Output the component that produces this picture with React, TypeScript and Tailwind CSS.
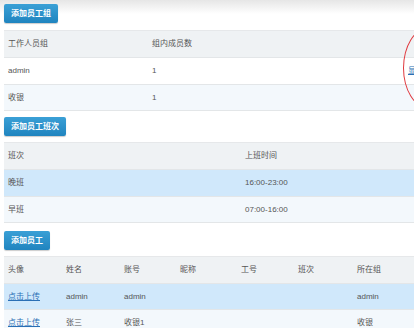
import * as React from "react";

const font = {
  fontFamily: '"Liberation Sans", "Noto Sans CJK SC", Arial, sans-serif',
};

function AddButton({ label }: { label: string }) {
  return (
    <button
      type="button"
      className="ml-1 flex h-[19px] w-fit items-center rounded-[2px] bg-gradient-to-b from-[#3aa0d6] to-[#1f84bf] px-[7px] text-[8px] leading-none font-bold text-white shadow-[0_1px_1px_rgba(0,0,0,0.2)]"
    >
      {label}
    </button>
  );
}

type Row = { bg: string; cells: React.ReactNode[] };

function Table({
  cols,
  head,
  rows,
  rowHeights,
}: {
  cols: string;
  head: string[];
  rows: Row[];
  rowHeights: string[];
}) {
  return (
    <div className="ml-1 w-[460px] text-[8px] leading-none text-[#555]">
      <div
        className={`grid h-[27px] items-center border-t border-[#e6e8ea] bg-[#eff2f4] ${cols}`}
      >
        {head.map((h, i) => (
          <div key={i} className="pl-1">
            {h}
          </div>
        ))}
      </div>
      {rows.map((r, ri) => (
        <div
          key={ri}
          className={`grid items-center border-t border-[#e3e6e8] ${rowHeights[ri]} ${r.bg} ${cols}`}
        >
          {r.cells.map((c, ci) => (
            <div key={ci} className="pl-1 whitespace-nowrap">
              {c}
            </div>
          ))}
        </div>
      ))}
      <div className="border-t border-[#e3e6e8]" />
    </div>
  );
}

const Link = ({ children }: { children: React.ReactNode }) => (
  <span className="text-[#2a6fb5] underline">{children}</span>
);

export default function App() {
  return (
    <div
      style={font}
      className="relative h-[328px] w-[414px] overflow-hidden bg-[linear-gradient(to_bottom,#e6e6e6,#ffffff_14px)]"
    >
      <div className="pt-1">
        <AddButton label="添加员工组" />
        <div className="mt-[7px]">
          <Table
            cols="grid-cols-[144px_256px_1fr]"
            head={["工作人员组", "组内成员数", ""]}
            rowHeights={["h-[27px]", "h-[26px]"]}
            rows={[
              { bg: "bg-white", cells: ["admin", "1", <Link key="l">显示</Link>] },
              { bg: "bg-[#f3f8fc]", cells: ["收银", "1", ""] },
            ]}
          />
        </div>

        <div className="mt-[6px]">
          <AddButton label="添加员工班次" />
        </div>
        <div className="mt-[6px]">
          <Table
            cols="grid-cols-[237px_1fr]"
            head={["班次", "上班时间"]}
            rowHeights={["h-[27px]", "h-[26px]"]}
            rows={[
              { bg: "bg-[#d0e8fb]", cells: ["晚班", "16:00-23:00"] },
              { bg: "bg-[#f3f8fc]", cells: ["早班", "07:00-16:00"] },
            ]}
          />
        </div>

        <div className="mt-[8px]">
          <AddButton label="添加员工" />
        </div>
        <div className="mt-[6px]">
          <Table
            cols="grid-cols-[58px_58px_56px_61px_57px_59px_1fr]"
            head={["头像", "姓名", "账号", "昵称", "工号", "班次", "所在组"]}
            rowHeights={["h-[26px]", "h-[26px]"]}
            rows={[
              {
                bg: "bg-[#d0e8fb]",
                cells: [<Link key="a">点击上传</Link>, "admin", "admin", "", "", "", "admin"],
              },
              {
                bg: "bg-[#f3f8fc]",
                cells: [<Link key="b">点击上传</Link>, "张三", "收银1", "", "", "", "收银"],
              },
            ]}
          />
        </div>
      </div>

      {/* 红色圈注 */}
      <div className="pointer-events-none absolute left-[403px] top-[28px] h-[80px] w-[50px] rounded-[50%] border-[1.5px] border-[#e0393e]" />
    </div>
  );
}
